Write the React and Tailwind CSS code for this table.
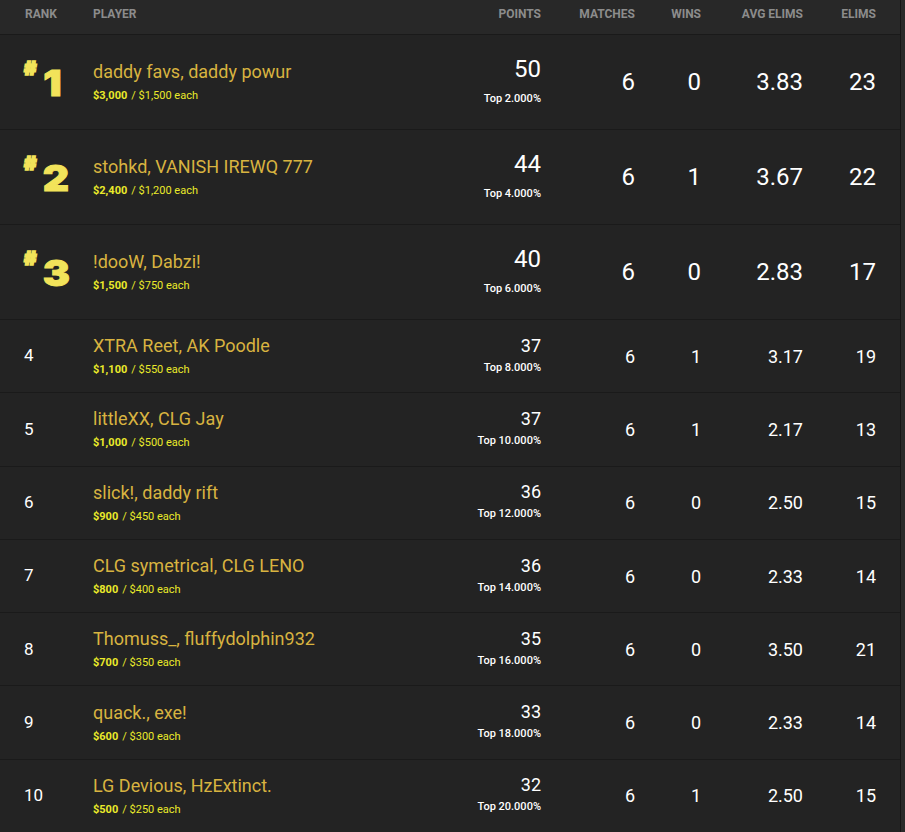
import React from 'react';

const rows = [
  { rank: 1, name: 'daddy favs, daddy powur', total: '$3,000', each: '$1,500', points: 50, top: '2.000', matches: 6, wins: 0, avg: '3.83', elims: 23 },
  { rank: 2, name: 'stohkd, VANISH IREWQ 777', total: '$2,400', each: '$1,200', points: 44, top: '4.000', matches: 6, wins: 1, avg: '3.67', elims: 22 },
  { rank: 3, name: '!dooW, Dabzi!', total: '$1,500', each: '$750', points: 40, top: '6.000', matches: 6, wins: 0, avg: '2.83', elims: 17 },
  { rank: 4, name: 'XTRA Reet, AK Poodle', total: '$1,100', each: '$550', points: 37, top: '8.000', matches: 6, wins: 1, avg: '3.17', elims: 19 },
  { rank: 5, name: 'littleXX, CLG Jay', total: '$1,000', each: '$500', points: 37, top: '10.000', matches: 6, wins: 1, avg: '2.17', elims: 13 },
  { rank: 6, name: 'slick!, daddy rift', total: '$900', each: '$450', points: 36, top: '12.000', matches: 6, wins: 0, avg: '2.50', elims: 15 },
  { rank: 7, name: 'CLG symetrical, CLG LENO', total: '$800', each: '$400', points: 36, top: '14.000', matches: 6, wins: 0, avg: '2.33', elims: 14 },
  { rank: 8, name: 'Thomuss_, fluffydolphin932', total: '$700', each: '$350', points: 35, top: '16.000', matches: 6, wins: 0, avg: '3.50', elims: 21 },
  { rank: 9, name: 'quack., exe!', total: '$600', each: '$300', points: 33, top: '18.000', matches: 6, wins: 0, avg: '2.33', elims: 14 },
  { rank: 10, name: 'LG Devious, HzExtinct.', total: '$500', each: '$250', points: 32, top: '20.000', matches: 6, wins: 1, avg: '2.50', elims: 15 },
];

function RankBadge({ rank }) {
  return (
    <div className="flex items-start text-[#f2e35a]" style={{ fontFamily: 'Inter, sans-serif' }}>
      <span className="text-[19px] font-black leading-none mt-[-4px] [-webkit-text-stroke:1.5px_#f2e35a]">#</span>
      <span className="ml-[7px] mt-[2px] text-[37px] font-black leading-none scale-x-[1.1] scale-y-[0.95] tracking-tight [-webkit-text-stroke:1px_#f2e35a]">{rank}</span>
    </div>
  );
}

function Row({ r }) {
  const top3 = r.rank <= 3;
  const big = top3 ? 'text-[24px]' : 'text-[18px]';
  return (
    <div className={`flex items-center border-b border-[#1a1a1a] ${top3 ? 'h-[95px]' : 'h-[73.3px]'}`}>
      <div className="w-[93px] pl-[24px] shrink-0">
        {top3 ? <RankBadge rank={r.rank} /> : <span className="text-[17px] text-white">{r.rank}</span>}
      </div>
      <div className="flex-1 min-w-0">
        <div className="text-[18px] leading-[22px] text-[#d8b340]">{r.name}</div>
        <div className="mt-[6px] text-[11px] leading-[14px] text-[#eaea2a]">
          <span className="font-bold">{r.total}</span>
          <span className="ml-[4px]">/ {r.each} each</span>
        </div>
      </div>
      <div className="w-[100px] text-right text-white">
        <div className={`${big} leading-none`}>{r.points}</div>
        <div className={`text-[11px] font-medium leading-[16px] ${top3 ? 'mt-[10px]' : 'mt-[5px]'}`}>Top {r.top}%</div>
      </div>
      <div className={`w-[94px] text-right text-white ${big}`}>{r.matches}</div>
      <div className={`w-[66px] text-right text-white ${big}`}>{r.wins}</div>
      <div className={`w-[102px] text-right text-white ${big}`}>{r.avg}</div>
      <div className={`w-[73px] text-right text-white ${big}`}>{r.elims}</div>
      <div className="w-[24px]" />
    </div>
  );
}

export default function App() {
  return (
    <div className="w-[905px] h-[832px] overflow-hidden bg-[#2a2a2a]" style={{ fontFamily: 'Roboto, sans-serif' }}>
      <div className="w-[901px] bg-[#232323] border-r border-[#161616]">
        <div className="flex h-[35px] pt-[5px] bg-[#282828] border-b border-[#1a1a1a] text-[12px] font-bold uppercase text-[#8c8c8c]">
          <div className="w-[93px] pl-[25px]">Rank</div>
          <div className="flex-1">Player</div>
          <div className="w-[100px] text-right">Points</div>
          <div className="w-[94px] text-right">Matches</div>
          <div className="w-[66px] text-right">Wins</div>
          <div className="w-[102px] text-right">Avg Elims</div>
          <div className="w-[73px] text-right">Elims</div>
          <div className="w-[24px]" />
        </div>
        {rows.map(r => <Row key={r.rank} r={r} />)}
      </div>
    </div>
  );
}
